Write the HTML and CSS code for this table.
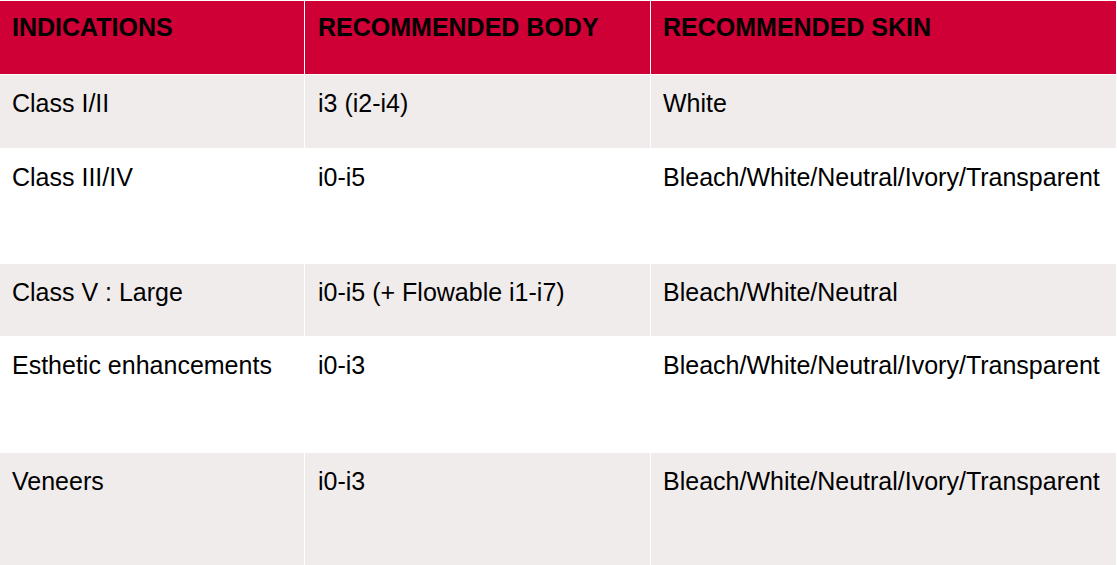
FILE: index.html
```html
<!DOCTYPE html>
<html lang="en">
<head>
<meta charset="utf-8">
<title>Indications</title>
<link rel="stylesheet" href="styles.css">
</head>
<body>
<div class="table">
  <div class="cell head c1">INDICATIONS</div>
  <div class="cell head c2">RECOMMENDED BODY</div>
  <div class="cell head c3">RECOMMENDED SKIN</div>

  <div class="cell gray c1">Class I/II</div>
  <div class="cell gray c2">i3 (i2-i4)</div>
  <div class="cell gray c3">White</div>

  <div class="cell white c1">Class III/IV</div>
  <div class="cell white c2">i0-i5</div>
  <div class="cell white c3">Bleach/White/Neutral/Ivory/Transparent</div>

  <div class="cell gray c1">Class V : Large</div>
  <div class="cell gray c2">i0-i5 (+ Flowable i1-i7)</div>
  <div class="cell gray c3">Bleach/White/Neutral</div>

  <div class="cell white c1">Esthetic enhancements</div>
  <div class="cell white c2">i0-i3</div>
  <div class="cell white c3">Bleach/White/Neutral/Ivory/Transparent</div>

  <div class="cell gray c1">Veneers</div>
  <div class="cell gray c2">i0-i3</div>
  <div class="cell gray c3">Bleach/White/Neutral/Ivory/Transparent</div>
</div>
</body>
</html>
```
FILE: styles.css
```css
html, body {
  margin: 0;
  padding: 0;
  background: #ffffff;
}
body {
  width: 1117px;
  height: 565px;
  overflow: hidden;
  font-family: "Liberation Sans", Arial, sans-serif;
  color: #000000;
}
.table {
  display: grid;
  grid-template-columns: 304px 345px 465px;
  grid-template-rows: 73px 73px 114px 72px 115px 120px;
  column-gap: 1px;
  row-gap: 1px;
  padding: 1px 1px 0 0;
  background: #ffffff;
}
.cell {
  font-size: 25px;
  line-height: normal;
  padding-top: 14px;
  white-space: nowrap;
}
.c1 { padding-left: 12px; }
.c2 { padding-left: 13px; }
.c3 { padding-left: 12px; }
.head {
  background: #cf0036;
  font-weight: bold;
  padding-top: 12px;
}
.gray {
  background: #f0ecec;
}
.white {
  background: #ffffff;
}
```
